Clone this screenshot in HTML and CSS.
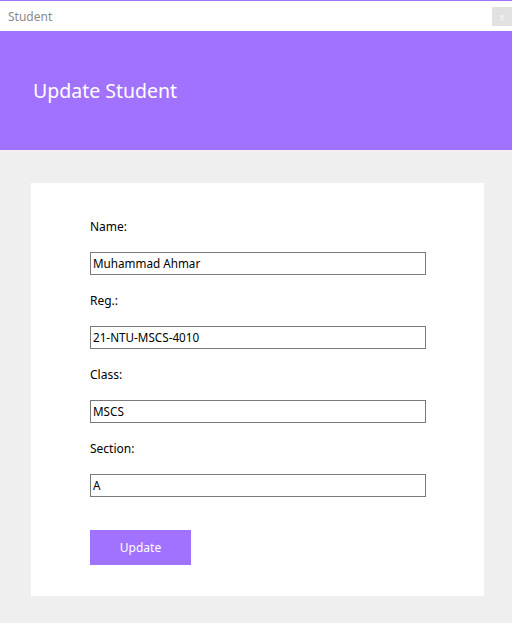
FILE: index.html
```html
<!DOCTYPE html>
<html>
<head>
<meta charset="utf-8">
<link rel="stylesheet" href="styles.css">
</head>
<body>
<div class="window">
  <div class="titlebar">
    <span class="title">Student</span>
    <span class="close">x</span>
  </div>
  <div class="header">
    <h1>Update Student</h1>
  </div>
  <div class="content">
    <div class="card">
      <div class="field">
        <label>Name:</label>
        <div class="input">Muhammad Ahmar</div>
      </div>
      <div class="field">
        <label>Reg.:</label>
        <div class="input">21-NTU-MSCS-4010</div>
      </div>
      <div class="field">
        <label>Class:</label>
        <div class="input">MSCS</div>
      </div>
      <div class="field">
        <label>Section:</label>
        <div class="input">A</div>
      </div>
      <button class="btn">Update</button>
    </div>
  </div>
</div>
</body>
</html>
```
FILE: styles.css
```css
* { box-sizing: border-box; }
html, body { margin: 0; padding: 0; }
body {
  width: 512px;
  height: 623px;
  overflow: hidden;
  font-family: "Noto Sans", "Open Sans", sans-serif;
  background: #efefef;
}
.window {
  border-top: 1px solid #a070ff;
}
.titlebar {
  height: 30px;
  background: #fff;
  display: flex;
  align-items: center;
  justify-content: space-between;
  padding-left: 8px;
}
.title {
  font-size: 12px;
  color: #8a8a8a;
}
.close {
  width: 20px;
  height: 19px;
  background: #e1e1e1;
  color: #f4f4f4;
  font-size: 10px;
  display: flex;
  align-items: center;
  justify-content: center;
  margin-top: 1px;
}
.header {
  height: 119px;
  background: #a172ff;
  display: flex;
  align-items: center;
  padding-left: 33px;
}
.header h1 {
  margin: 0;
  font-weight: normal;
  font-size: 19.5px;
  color: #fff;
  line-height: 1;
}
.content {
  padding: 33px 28px 27px 31px;
}
.card {
  background: #fff;
  height: 413px;
  padding: 36px 58px 0 59px;
}
.field {
  display: flex;
  flex-direction: column;
  margin-bottom: 18px;
}
label {
  font-size: 12px;
  color: #000;
  line-height: 16px;
  height: 16px;
}
.input {
  margin-top: 17px;
  width: 336px;
  height: 23px;
  border: 1px solid #7a7a7a;
  font-size: 11.7px;
  line-height: 21px;
  padding-left: 2px;
  color: #000;
}
.btn {
  margin-top: 15px;
  width: 101px;
  height: 35px;
  background: #a172ff;
  border: none;
  color: #fff;
  font-family: inherit;
  font-size: 12px;
  padding: 0;
}
```
